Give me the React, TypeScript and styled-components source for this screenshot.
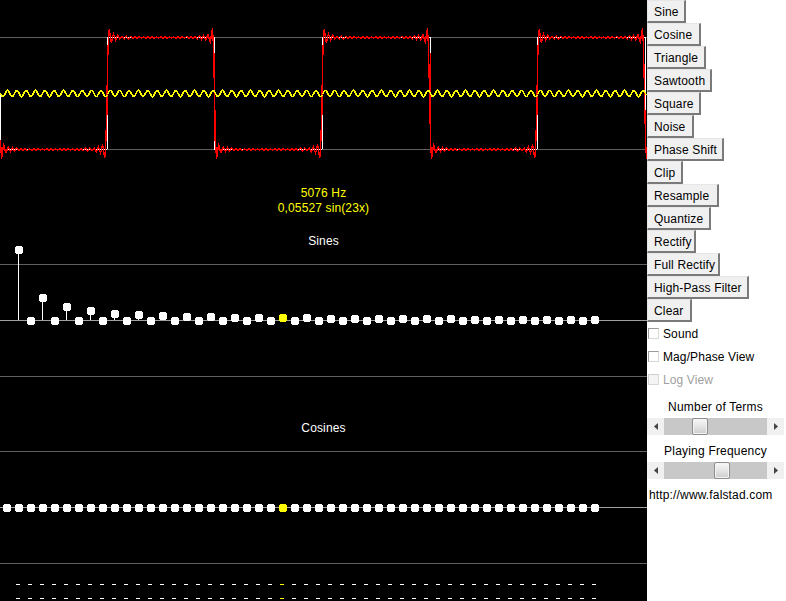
import React from 'react';
import styled, { createGlobalStyle } from 'styled-components';

const WIDTH = 647;
const HEIGHT = 601;
const PERIOD = 215;
const BASE_Y = 93;
const AMP = 56;

const buttons = [
  { label: 'Sine', width: 39 },
  { label: 'Cosine', width: 54 },
  { label: 'Triangle', width: 59 },
  { label: 'Sawtooth', width: 65 },
  { label: 'Square', width: 54 },
  { label: 'Noise', width: 47 },
  { label: 'Phase Shift', width: 77 },
  { label: 'Clip', width: 36 },
  { label: 'Resample', width: 72 },
  { label: 'Quantize', width: 64 },
  { label: 'Rectify', width: 49 },
  { label: 'Full Rectify', width: 73 },
  { label: 'High-Pass Filter', width: 102 },
  { label: 'Clear', width: 45 },
];

// top edge of each odd harmonic's dot in the sines graph
const oddTops = [
  246, 294, 303, 307, 310, 311, 312, 313, 313, 314, 314, 314, 314, 315, 315,
  315, 315, 315, 315, 316, 316, 316, 316, 316, 316,
];

const edges = [0, 107, 214, 322, 430, 537, 645];

// middle part of each jump, where the red line runs over the white target
const jumps = [
  { x: 107, y: 62, h: 53 },
  { x: 214, y: 53, h: 88 },
  { x: 322, y: 62, h: 53 },
  { x: 430, y: 53, h: 88 },
  { x: 537, y: 62, h: 53 },
];

const square = (x: number, terms: number) => {
  let sum = 0;
  for (let n = 1; n <= terms; n += 2) {
    sum += (4 / (Math.PI * n)) * Math.sin((2 * Math.PI * n * x) / PERIOD);
  }
  return sum;
};

const points = (fn: (x: number) => number) => {
  const out: string[] = [];
  for (let x = 0; x < WIDTH; x++) {
    out.push(`${x + 0.5},${(BASE_Y + AMP * fn(x) + 0.5).toFixed(1)}`);
  }
  return out.join(' ');
};

// the jumps sit one pixel left of the target edges
const redWave = points(x => square(x + 1, 49));
const yellowWave = points(
  x => 0.05527 * Math.sin((2 * Math.PI * 23 * x) / PERIOD),
);

const Arrow = ({ left }: { left?: boolean }) => (
  <svg width="4" height="7" viewBox="0 0 4 7">
    <polygon points={left ? '4,0 4,7 0,3.5' : '0,0 0,7 4,3.5'} fill="#444" />
  </svg>
);

const Slider = ({ offset }: { offset: number }) => (
  <ScrollBar>
    <ScrollEnd>
      <Arrow left />
    </ScrollEnd>
    <Track>
      <Thumb $offset={offset} />
    </Track>
    <ScrollEnd>
      <Arrow />
    </ScrollEnd>
  </ScrollBar>
);

const Dot = ({ x, y, color }: { x: number; y: number; color: string }) => (
  <g fill={color}>
    <rect x={x + 1} y={y} width="6" height="8" />
    <rect x={x} y={y + 1} width="8" height="6" />
  </g>
);

const Scope = () => (
  <svg width={WIDTH} height={HEIGHT} viewBox={`0 0 ${WIDTH} ${HEIGHT}`}>
    <g shapeRendering="crispEdges">
      {[37, 149, 264, 376, 451, 563].map(y => (
        <rect key={y} x="0" y={y} width={WIDTH} height="1" fill="#606060" />
      ))}
      {[320, 507].map(y => (
        <rect key={y} x="0" y={y} width={WIDTH} height="1" fill="#a0a0a0" />
      ))}

      {edges.slice(0, -1).map((x, i) => (
        <rect
          key={x}
          x={x}
          y={i % 2 === 0 ? 149 : 37}
          width={edges[i + 1] - x}
          height="1"
          fill="#fff"
        />
      ))}
      {edges.slice(1).map(x => (
        <rect key={x} x={x} y="37" width="1" height="112" fill="#fff" />
      ))}
      <rect x="0" y="93" width="1" height="56" fill="#fff" />

      <polyline points={redWave} fill="none" stroke="#f00" strokeWidth="1.3" />
      {jumps.map(j => (
        <rect key={j.x} x={j.x} y={j.y} width="1" height={j.h} fill="#f00" />
      ))}
      <polyline
        points={yellowWave}
        fill="none"
        stroke="#ff0"
        strokeWidth="1.6"
      />

      {oddTops.map((top, i) => (
        <rect
          key={i}
          x={18 + i * 24}
          y={top + 4}
          width="1"
          height={320 - top - 4}
          fill="#fff"
        />
      ))}

      {Array.from({ length: 49 }, (_, k) => {
        const color = k === 22 ? '#ff0' : '#fff';
        return (
          <g key={k} fill={color}>
            <rect x={16 + k * 12} y="584" width="4" height="1" />
            <rect x={16 + k * 12} y="598" width="4" height="1" />
          </g>
        );
      })}

      {Array.from({ length: 49 }, (_, k) => (
        <Dot
          key={k}
          x={15 + k * 12}
          y={k % 2 === 0 ? oddTops[k / 2] : 317}
          color={k === 22 ? '#ff0' : '#fff'}
        />
      ))}
      {Array.from({ length: 50 }, (_, k) => (
        <Dot
          key={k}
          x={3 + k * 12}
          y={504}
          color={k === 23 ? '#ff0' : '#fff'}
        />
      ))}
    </g>

    <ScopeText x="323.5" y="197" fill="#ff0">
      5076 Hz
    </ScopeText>
    <ScopeText x="323.5" y="212" fill="#ff0">
      0,05527 sin(23x)
    </ScopeText>
    <ScopeText x="323.5" y="245" fill="#fff">
      Sines
    </ScopeText>
    <ScopeText x="323.5" y="432" fill="#fff">
      Cosines
    </ScopeText>
  </svg>
);

const App = () => {
  return (
    <Container>
      <GlobalStyle />
      <Canvas>
        <Scope />
      </Canvas>
      <Sidebar>
        {buttons.map(b => (
          <Button key={b.label} $width={b.width}>
            {b.label}
          </Button>
        ))}
        <CheckRow>
          <Box />
          Sound
        </CheckRow>
        <CheckRow>
          <Box />
          Mag/Phase View
        </CheckRow>
        <CheckRow $disabled>
          <Box $disabled />
          Log View
        </CheckRow>
        <SliderLabel>Number of Terms</SliderLabel>
        <Slider offset={28} />
        <SliderLabel>Playing Frequency</SliderLabel>
        <Slider offset={50} />
        <Url>http://www.falstad.com</Url>
      </Sidebar>
    </Container>
  );
};
export default App;

const GlobalStyle = createGlobalStyle`
  html, body {
    margin: 0;
    padding: 0;
    background: #fff;
    overflow: hidden;
  }
  * {
    box-sizing: border-box;
  }
`;

const Container = styled.div`
  display: flex;
  width: 786px;
  height: 601px;
  font-family: 'Liberation Sans', Arial, sans-serif;
  font-size: 12px;
  color: #000;
`;

const Canvas = styled.div`
  flex: 0 0 647px;
  height: 601px;
  background: #000;
  overflow: hidden;
  svg {
    display: block;
  }
`;

const ScopeText = styled.text`
  font-family: 'Liberation Sans', Arial, sans-serif;
  font-size: 12px;
  letter-spacing: 0.13px;
  text-anchor: middle;
`;

const Sidebar = styled.div`
  display: flex;
  flex-direction: column;
  align-items: flex-start;
  flex: 1;
`;

const Button = styled.button<{ $width: number }>`
  width: ${p => p.$width}px;
  height: 23px;
  padding: 2px 0 0 6px;
  text-align: left;
  background: #f0f0f0;
  border-style: solid;
  border-width: 1px 2px 2px 1px;
  border-color: #e6e6e6 #7a7a7a #7a7a7a #e6e6e6;
  font: inherit;
  letter-spacing: 0.15px;
  color: #000;
`;

const CheckRow = styled.label<{ $disabled?: boolean }>`
  display: flex;
  align-items: center;
  gap: 4px;
  height: 23px;
  padding-left: 1px;
  letter-spacing: 0.1px;
  color: ${p => (p.$disabled ? '#a0a0a0' : '#000')};
`;

const Box = styled.span<{ $disabled?: boolean }>`
  width: 11px;
  height: 11px;
  background: ${p => (p.$disabled ? '#f4f4f4' : '#fff')};
  border: 1px solid ${p => (p.$disabled ? '#cfcfcf' : '#9a9a9a')};
  border-right-color: #d8d8d8;
  border-bottom-color: #d8d8d8;
`;

const SliderLabel = styled.div`
  width: 137px;
  height: 22px;
  margin-top: 5px;
  line-height: 22px;
  text-align: center;
  letter-spacing: 0.2px;
  white-space: nowrap;
`;

const ScrollBar = styled.div`
  display: flex;
  width: 137px;
  height: 17px;
  background: #f0f0f0;
`;

const ScrollEnd = styled.div`
  display: flex;
  align-items: center;
  justify-content: center;
  flex: 0 0 17px;
`;

const Track = styled.div`
  flex: 1;
  background: #c8c8c8;
`;

const Thumb = styled.div<{ $offset: number }>`
  width: 16px;
  height: 17px;
  margin-left: ${p => p.$offset}px;
  border: 1px solid #8e8e8e;
  border-radius: 2px;
  background: linear-gradient(#f8f8f8, #e4e4e4 50%, #cccccc);
  box-shadow: inset 0 0 0 1px #f4f4f4;
`;

const Url = styled.div`
  height: 22px;
  margin: 5px 0 0 2px;
  line-height: 22px;
  letter-spacing: 0.15px;
  white-space: nowrap;
`;
